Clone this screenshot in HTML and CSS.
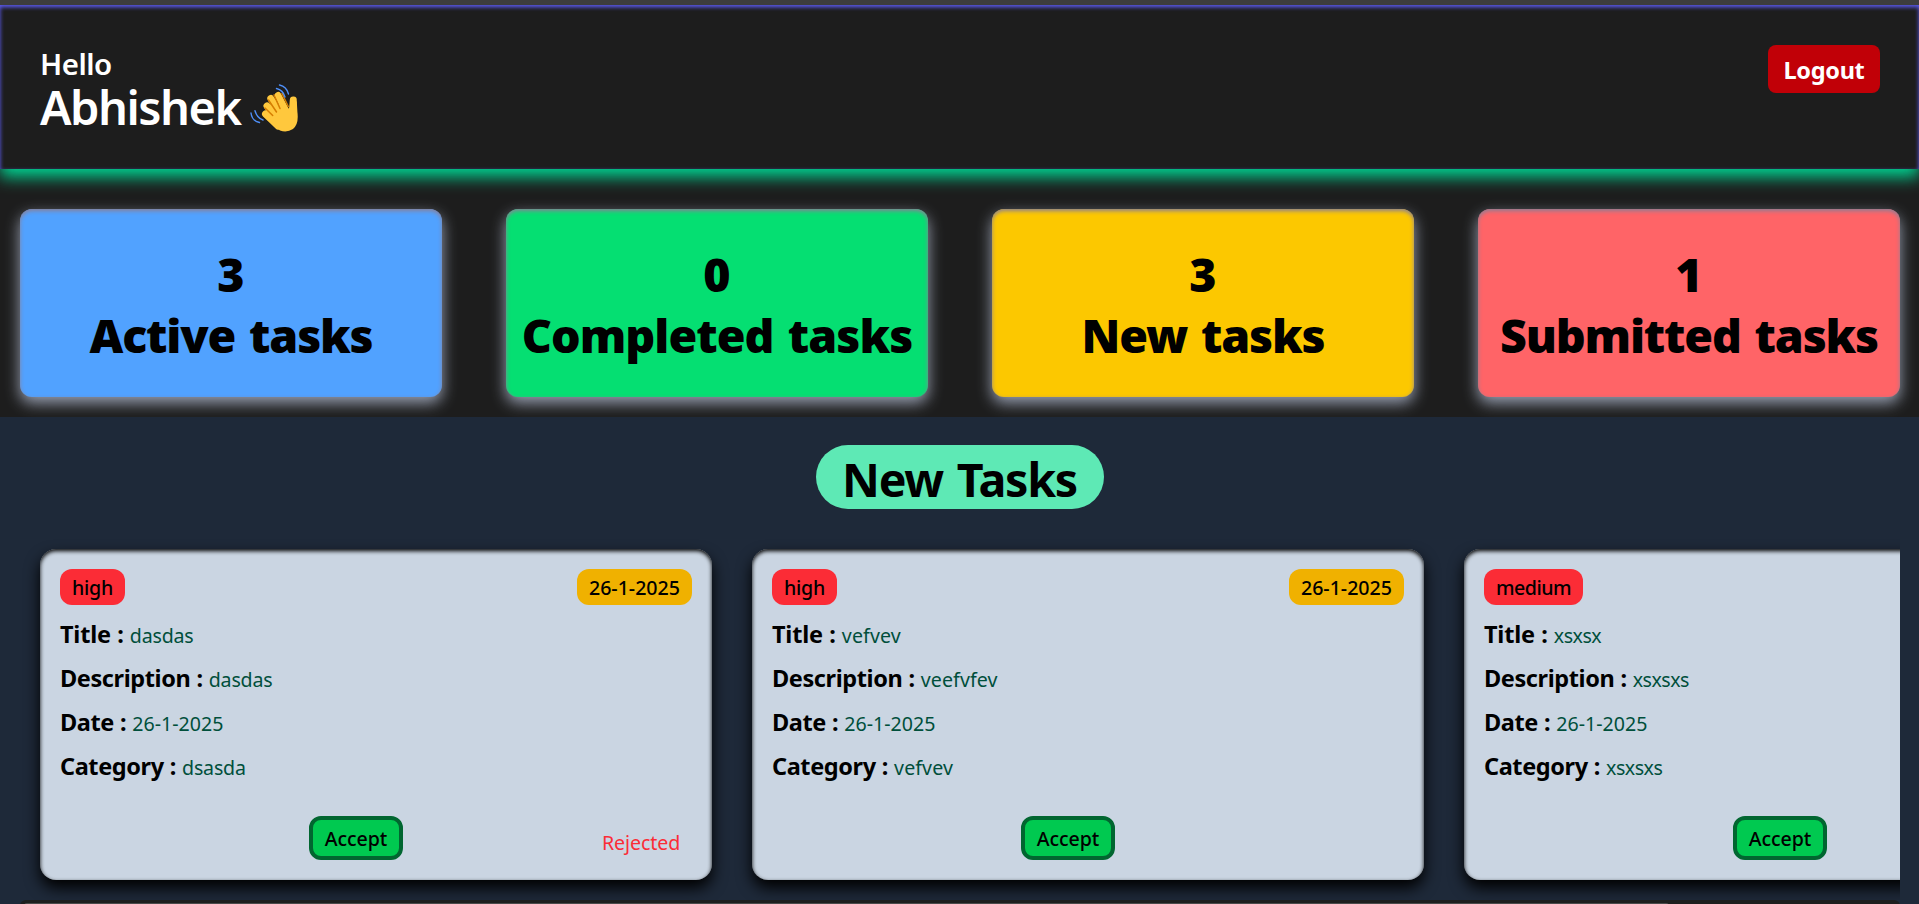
FILE: index.html
```
<!DOCTYPE html>
<html lang="en">
<head>
<meta charset="utf-8">
<title>Employee Dashboard</title>
<link rel="stylesheet" href="styles.css">
</head>
<body>
<header class="header">
  <div class="greeting">
    <p class="hello">Hello</p>
    <h1 class="name">Abhishek
      <svg class="wave" viewBox="0 0 48 48" fill="none" stroke-linecap="round" stroke-linejoin="round">
        <g stroke="#ffc83d" stroke-width="7">
          <path d="M28 11.5L37 29M20.8 14.5L33 34M17 22L30 38M15.5 30L28 42M43.3 16L42 32"/>
        </g>
        <path fill="#ffc83d" d="M26 20L38 25Q41 22 46.8 17L47.4 28Q49 40 43 45Q37 49 30 46.500Q25 43 13 32Z"/>
        <g stroke="#d67d00" stroke-width="1.500">
          <path d="M24 11L30 24.500M18.500 16L26.500 28M15 24L22.700 31.500M32 9.500L38.300 22.500"/>
        </g>
        <g stroke="#4f8ff7" stroke-width="1.400">
          <path d="M29.500 1Q36.500 2.500 38.500 10M26.500 4.500Q33 6 35 13M1 29Q2 37 9.500 38.500M5 26.700Q7 34 13 36"/>
        </g>
      </svg>
    </h1>
  </div>
  <button class="logout">Logout</button>
</header>

<section class="stats">
  <div class="stat stat-active"><span>3</span><span class="label">Active tasks</span></div>
  <div class="stat stat-completed"><span>0</span><span class="label">Completed tasks</span></div>
  <div class="stat stat-new"><span>3</span><span class="label">New tasks</span></div>
  <div class="stat stat-submitted"><span>1</span><span class="label">Submitted tasks</span></div>
</section>

<main class="board">
  <h2 class="board-title">New Tasks</h2>
  <div class="scroller">
    <article class="card">
      <div class="tags"><span class="tag priority">high</span><span class="tag due">26-1-2025</span></div>
      <p class="row"><b class="k-title">Title : </b><span class="val">dasdas</span></p>
      <p class="row"><b>Description : </b><span class="val">dasdas</span></p>
      <p class="row"><b>Date : </b><span class="val date">26-1-2025</span></p>
      <p class="row"><b>Category : </b><span class="val">dsasda</span></p>
      <div class="actions"><button class="accept">Accept</button><span class="rejected">Rejected</span></div>
    </article>
    <article class="card">
      <div class="tags"><span class="tag priority">high</span><span class="tag due">26-1-2025</span></div>
      <p class="row"><b class="k-title">Title : </b><span class="val vee">vefvev</span></p>
      <p class="row"><b>Description : </b><span class="val vee">veefvfev</span></p>
      <p class="row"><b>Date : </b><span class="val date">26-1-2025</span></p>
      <p class="row"><b>Category : </b><span class="val vee">vefvev</span></p>
      <div class="actions"><button class="accept">Accept</button></div>
    </article>
    <article class="card">
      <div class="tags"><span class="tag priority wide">medium</span></div>
      <p class="row"><b class="k-title">Title : </b><span class="val xs">xsxsx</span></p>
      <p class="row"><b>Description : </b><span class="val xs">xsxsxs</span></p>
      <p class="row"><b>Date : </b><span class="val date">26-1-2025</span></p>
      <p class="row"><b>Category : </b><span class="val xs">xsxsxs</span></p>
      <div class="actions"><button class="accept">Accept</button></div>
    </article>
  </div>
  <div class="scrollbar"><div class="thumb"></div></div>
</main>
</body>
</html>
```
FILE: styles.css
```
* { box-sizing: border-box; margin: 0; padding: 0; }

body {
  height: 904px;
  overflow: hidden;
  background: #1d1d1d;
  border-top: 5px solid #3d3d3d;
  font-family: "Noto Sans", "Open Sans", sans-serif;
  font-size: 19.6px;
  color: #000;
}

button { font-family: inherit; border: 0; }

.header {
  display: flex;
  justify-content: space-between;
  align-items: flex-start;
  height: 164px;
  padding: 40px 39px 40px 40px;
  color: #fff;
  box-shadow: inset 0 2px 4px #615fff, 0 8px 15px #00d492;
}
.hello { font-size: 29.4px; font-weight: 600; line-height: 38px; letter-spacing: -.5px; }
.name { display: flex; align-items: flex-start; gap: 9px; font-size: 47px; font-weight: 600; line-height: 49px; letter-spacing: -1.5px; }
.wave { width: 48px; height: 48px; margin-top: 1px; }
.logout {
  width: 112px;
  height: 48px;
  padding-top: 2px;
  border-radius: 8px;
  background: #c10007;
  color: #fff;
  font-size: 23.5px;
  font-weight: 700;
  letter-spacing: -.3px;
}

.stats { display: flex; gap: 64px; padding: 40px 20px 0; height: 248px; }
.stat {
  display: flex;
  flex-direction: column;
  align-items: center;
  width: 422px;
  height: 188px;
  flex: none;
  padding-top: 35px;
  border-radius: 12px;
  font-size: 46.6px;
  font-weight: 900;
  line-height: 61px;
  white-space: nowrap;
  box-shadow: inset 0 2px 4px #8a7f96, 0 6px 15px #99a1b3;
}
.label { letter-spacing: -1.2px; word-spacing: 3px; }
.stat-active { background: #51a2ff; }
.stat-completed { background: #05df72; }
.stat-completed .label { letter-spacing: -.95px; }
.stat-new { background: #fcc800; }
.stat-submitted { background: #ff6467; }

.board {
  position: relative;
  display: flex;
  flex-direction: column;
  align-items: center;
  height: 487px;
  padding-top: 28px;
  background: #1e2939;
}
.board-title {
  width: 288px;
  height: 64px;
  border-radius: 32px;
  background: #5ee9b5;
  font-size: 46.6px;
  font-weight: 700;
  line-height: 69px;
  letter-spacing: -1.3px;
  word-spacing: 3px;
  text-align: center;
}
.scroller {
  display: flex;
  flex: none;
  gap: 40px;
  width: 1880px;
  height: 391px;
  margin-left: 1px;
  padding: 40px 20px 0;
  overflow: hidden;
}
.card {
  flex: none;
  width: 672px;
  height: 331px;
  padding: 20px;
  border-radius: 16px;
  background: #cad5e2;
  box-shadow: inset 0 2px 4px #000, 0 8px 15px #000;
}
.tags { display: flex; justify-content: space-between; margin-bottom: 7px; }
.tag { height: 36px; padding: 0 12px; border-radius: 12px; line-height: 37px; font-weight: 500; }
.priority { background: #fb2c36; letter-spacing: -.25px; }
.wide { letter-spacing: -.5px; }
.due { background: #f0b100; }
.row { height: 44px; line-height: 44px; white-space: pre; }
.row b { font-size: 23.5px; font-weight: 700; letter-spacing: -.4px; word-spacing: .4px; }
.row .k-title { letter-spacing: -.2px; }
.val { color: #004f3b; letter-spacing: -.2px; }
.val.date { letter-spacing: 0; }
.val.vee { letter-spacing: .1px; }
.val.xs { letter-spacing: -.5px; }
.actions { display: flex; padding: 28px 0 0 249px; }
.accept {
  width: 94px;
  height: 44px;
  border: 4px solid #016630;
  border-radius: 12px;
  background: #00c950;
  font-size: 19.6px;
  font-weight: 500;
  letter-spacing: -.1px;
}
.rejected { margin: 5px 0 0 199px; line-height: 44px; height: 39px; color: #fb2c36; letter-spacing: -.1px; }

.scrollbar { width: 1880px; height: 12px; padding: 3px 4px; border-radius: 6px; background: #1e1e1e; flex: none; }
.thumb { width: 1645px; height: 6px; border-radius: 3px; background: #4a4a4a; }
```
